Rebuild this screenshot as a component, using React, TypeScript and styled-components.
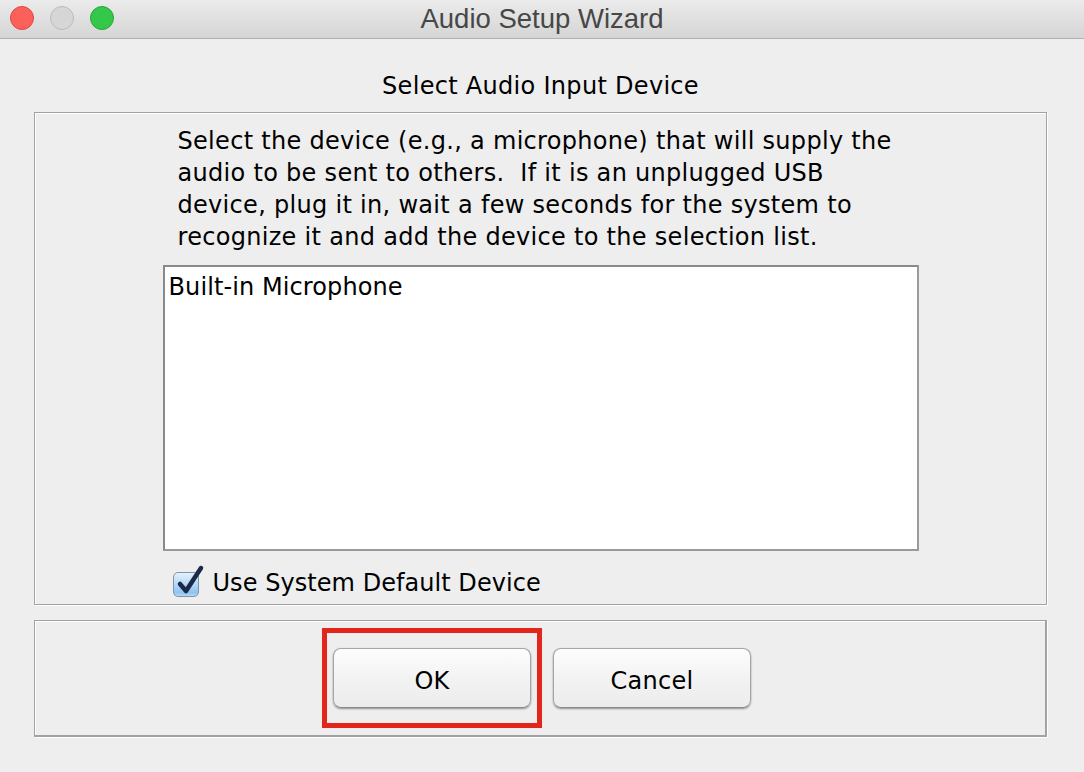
import React from 'react';
import styled, { createGlobalStyle } from 'styled-components';

const GlobalStyle = createGlobalStyle`
    html, body {
        margin: 0;
        padding: 0;
        background: #eeeeee;
    }
`;

const Window = styled.div`
    width: 1084px;
    height: 772px;
    display: flex;
    flex-direction: column;
    background-color: #eeeeee;
    font-family: 'DejaVu Sans', 'Noto Sans', sans-serif;
    letter-spacing: 0.3px;
    color: #000;
    overflow: hidden;
`;

const TitleBar = styled.div`
    position: relative;
    height: 38px;
    flex-shrink: 0;
    display: flex;
    align-items: center;
    justify-content: center;
    background: linear-gradient(#ebebeb, #d5d5d5);
    border-bottom: 1px solid #b1b1b1;
`;

const Lights = styled.div`
    position: absolute;
    left: 10px;
    top: 6px;
    display: flex;
    gap: 16px;
`;

const Light = styled.span<{ $fill: string; $edge: string }>`
    width: 22px;
    height: 22px;
    border-radius: 50%;
    background: ${(p) => p.$fill};
    border: 1px solid ${(p) => p.$edge};
`;

const Title = styled.div`
    font-family: 'Liberation Sans', Arial, sans-serif;
    font-size: 27.5px;
    letter-spacing: 0;
    color: #474747;
    line-height: 38px;
`;

const Content = styled.div`
    display: flex;
    flex-direction: column;
    padding: 0 37px 0 34px;
`;

const Heading = styled.div`
    padding-top: 33px;
    margin-bottom: 12px;
    line-height: 28px;
    font-size: 24px;
    text-align: center;
`;

const Etched = styled.div`
    border: 1px solid #a2a2a2;
    box-shadow: inset 1px 1px 0 #ffffff, 1px 1px 0 #ffffff;
`;

const DevicePanel = styled(Etched)`
    height: 493px;
    box-sizing: border-box;
    display: flex;
    flex-direction: column;
    align-items: center;
    padding-top: 12px;
`;

const Column = styled.div`
    width: 756px;
    display: flex;
    flex-direction: column;
`;

const Intro = styled.p`
    margin: 0 0 12px;
    padding: 0 0 0 15px;
    font-size: 24px;
    line-height: 32px;
    white-space: nowrap;
`;

const DeviceList = styled.div`
    height: 286px;
    box-sizing: border-box;
    background: #ffffff;
    border-top: 2px solid #8a8a8a;
    border-left: 2px solid #8a8a8a;
    border-right: 2px solid #9a9a9a;
    border-bottom: 2px solid #9a9a9a;
    padding: 4px 4px;
`;

const DeviceItem = styled.div`
    font-size: 24px;
    line-height: 32px;
    letter-spacing: 0.1px;
`;

const CheckRow = styled.label`
    margin-top: 18px;
    padding-left: 10px;
    display: flex;
    align-items: center;
    gap: 14px;
    height: 28px;
    font-size: 24px;
    letter-spacing: 0.05px;
`;

const CheckBox = styled.span`
    position: relative;
    width: 26px;
    height: 25px;
    box-sizing: border-box;
    border-radius: 5px;
    border: 1px solid #8294a8;
    background: linear-gradient(#e2f0fc, #b5d9f7 50%, #8fc3f0 85%, #b4d8f6);
    margin-top: 3px;
`;

const CheckMark = styled.svg`
    position: absolute;
    left: -1px;
    top: -11px;
    overflow: visible;
`;

const ButtonPanel = styled(Etched)`
    margin-top: 15px;
    height: 117px;
    box-sizing: border-box;
    border-right-width: 2px;
    border-bottom-width: 2px;
    display: flex;
    justify-content: center;
    align-items: center;
    gap: 22px;
    padding-left: 4px;
`;

const Highlight = styled.div`
    position: relative;
    display: flex;

    &::after {
        content: '';
        position: absolute;
        inset: -20px -11px;
        border: 5px solid #e2261b;
        pointer-events: none;
    }
`;

const Button = styled.button`
    width: 198px;
    height: 60px;
    border-radius: 8px;
    border: 1px solid #a5a5a5;
    border-bottom-color: #8a8a8a;
    background: linear-gradient(#fdfdfd, #f2f2f2 55%, #ececec);
    box-shadow: 0 1px 2px rgba(0, 0, 0, 0.4);
    font-family: 'DejaVu Sans', 'Noto Sans', sans-serif;
    font-size: 24px;
    letter-spacing: 0.3px;
    color: #000;
    padding: 5px 0 0;
`;

export default function App() {
    return (
        <Window>
            <GlobalStyle />
            <TitleBar>
                <Lights>
                    <Light $fill="#fc605b" $edge="#de4640" />
                    <Light $fill="#d6d6d6" $edge="#bbbbbb" />
                    <Light $fill="#34c749" $edge="#25a837" />
                </Lights>
                <Title>Audio Setup Wizard</Title>
            </TitleBar>
            <Content>
                <Heading>Select Audio Input Device</Heading>
                <DevicePanel>
                    <Column>
                        <Intro>
                            Select the device (e.g., a microphone) that will supply the
                            <br />
                            audio to be sent to others.&nbsp; If it is an unplugged USB
                            <br />
                            device, plug it in, wait a few seconds for the system to
                            <br />
                            recognize it and add the device to the selection list.
                        </Intro>
                        <DeviceList>
                            <DeviceItem>Built-in Microphone</DeviceItem>
                        </DeviceList>
                        <CheckRow>
                            <CheckBox>
                                <CheckMark width="32" height="36" viewBox="0 0 32 36">
                                    <path
                                        d="M7 22 L13 29 L28 6"
                                        fill="none"
                                        stroke="#1b2a48"
                                        strokeWidth="4.5"
                                        strokeLinecap="round"
                                        strokeLinejoin="round"
                                    />
                                </CheckMark>
                            </CheckBox>
                            Use System Default Device
                        </CheckRow>
                    </Column>
                </DevicePanel>
                <ButtonPanel>
                    <Highlight>
                        <Button>OK</Button>
                    </Highlight>
                    <Button>Cancel</Button>
                </ButtonPanel>
            </Content>
        </Window>
    );
}
